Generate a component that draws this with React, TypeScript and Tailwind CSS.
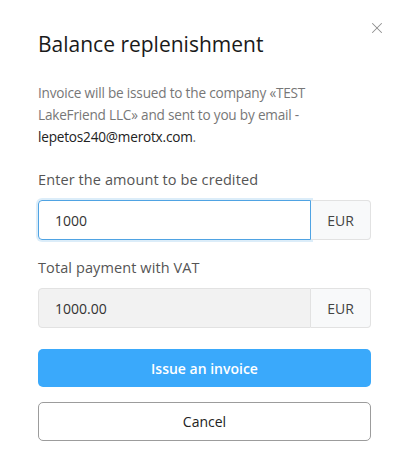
import { X } from "lucide-react";

const App = () => {
  return (
    <div className="w-[409px] h-[471px] bg-white relative" style={{ fontFamily: '"Open Sans", "Noto Sans", sans-serif' }}>
      <button className="absolute right-[23px] top-[19px] text-[#8f8f8f]">
        <X className="w-[18px] h-[18px]" strokeWidth={1.4} />
      </button>

      <div className="px-[38px] pt-[30px]">
        <h2 className="text-[21px] leading-[28px] font-medium text-[#1a1a1a]">Balance replenishment</h2>

        <p className="mt-[24px] pr-[8px] text-[13.6px] leading-[22px] text-[#777] tracking-[-0.2px]">
          Invoice will be issued to the company «TEST LakeFriend LLC» and sent to you by email -{" "}
          <span className="text-[#222] font-medium">lepetos240@merotx.com</span>.
        </p>

        <div className="mt-[22px] text-[14.5px] leading-[20px] font-medium text-[#555] tracking-[0.1px]">Enter the amount to be credited</div>
        <div className="mt-[10px] flex h-[40px]">
          <input
            defaultValue="1000"
            className="flex-1 min-w-0 h-full px-[16px] text-[14px] text-[#333] border border-[#4fa3e3] rounded-l-[4px] outline-none shadow-[0_0_0_2px_rgba(79,163,227,0.2)]"
          />
          <div className="w-[60px] h-full flex items-center justify-center text-[14px] text-[#444] bg-[#f8f9fa] border border-l-0 border-[#e2e2e2] rounded-r-[4px]">EUR</div>
        </div>

        <div className="mt-[18px] text-[14.5px] leading-[20px] font-medium text-[#555] tracking-[0.1px]">Total payment with VAT</div>
        <div className="mt-[10px] flex h-[40px]">
          <div className="flex-1 h-full px-[16px] flex items-center text-[14px] text-[#333] bg-[#f2f2f2] border border-[#e2e2e2] rounded-l-[4px]">1000.00</div>
          <div className="w-[60px] h-full flex items-center justify-center text-[14px] text-[#444] bg-[#f8f9fa] border border-l-0 border-[#e2e2e2] rounded-r-[4px]">EUR</div>
        </div>

        <button className="mt-[21px] w-full h-[38px] rounded-[5px] bg-[#3aa9fb] text-white text-[14px] font-semibold">Issue an invoice</button>
        <button className="mt-[15px] w-full h-[39px] rounded-[5px] border border-[#9c9c9c] bg-white text-[#222] text-[14px]">Cancel</button>
      </div>
    </div>
  );
};

export default App;
